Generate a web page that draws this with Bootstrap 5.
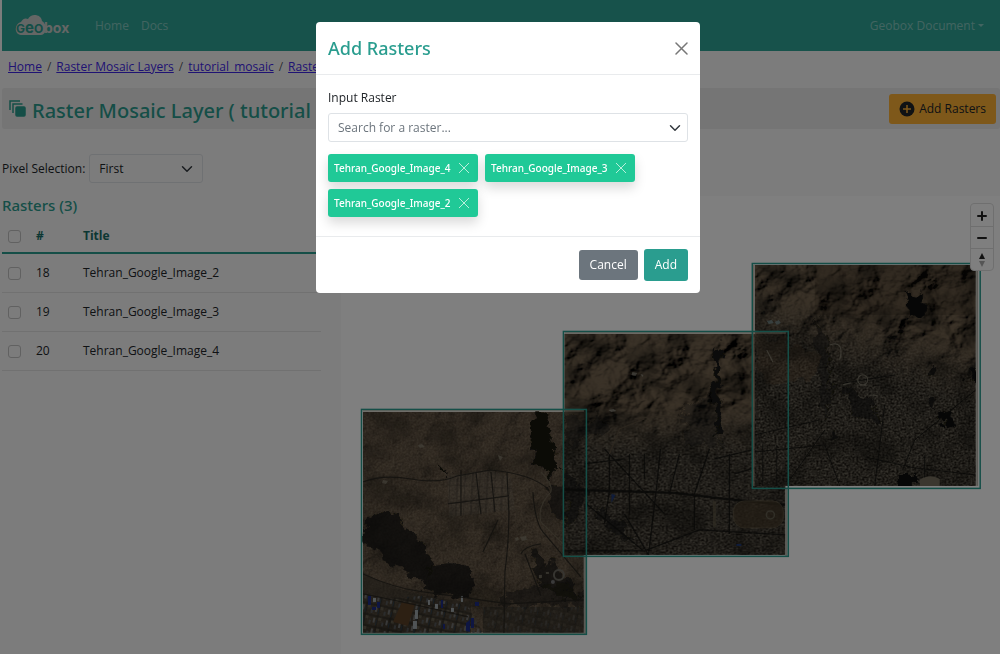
<!DOCTYPE html>
<html lang="en">
<head>
<meta charset="utf-8">
<meta name="viewport" content="width=device-width, initial-scale=1">
<title>Geobox – Raster Mosaic Layer</title>
<link rel="stylesheet" href="https://cdn.jsdelivr.net/npm/bootstrap@5.3.0/dist/css/bootstrap.min.css">
<style>
  :root { --geo: #2a9d8f; --geo-dark: #176f66; }
  body { font-family: "Open Sans", "Noto Sans", sans-serif; font-size: 12px; line-height: 18px; background: #f9f9f9; color: #212529; min-height: 100vh; }
  h1, h2, .chip { font-family: "Noto Sans", sans-serif; }
  .topbar { background: #2fa597; height: 51px; padding: 0 16px 0 13px; }
  .topbar a { color: rgba(255,255,255,.42); text-decoration: none; }
  .topbar .dropdown-toggle::after { vertical-align: 3px; margin-left: 3px; }
  .page { padding-left: 2px; min-height: 100vh; }
  .crumbs { padding: 7px 6px 12px; }
  .crumbs a { color: #3f26e8; }
  .crumbs .breadcrumb-item + .breadcrumb-item { padding-left: 5px; }
  .crumbs .breadcrumb-item + .breadcrumb-item::before { padding-right: 5px; }
  .titlebar { background: #eaeaea; height: 41px; padding: 0 4px 0 7px; border-radius: 3px; gap: 6px; }
  .titlebar h1 { color: var(--geo); font-size: 20px; line-height: 26px; font-weight: 500; padding-top: 4px; }
  .btn { font-size: 12px; line-height: 18px; border-radius: 3px; padding: 5px 10px; }
  .btn-add { background: #fdb034; color: #212529; padding: 5px 9px; }
  .sidebar { width: 34%; padding-right: 20px; }
  .choice { margin-top: 25px; gap: 4px; }
  .picker { width: 114px; height: 29px; }
  .form-select { font-size: 12px; line-height: 18px; padding: 4px 28px 4px 9px; border-radius: 3px; background-size: 12px; background-position: right 9px center; background-color: transparent; }
  .sidebar h2 { color: var(--geo); font-size: 15px; line-height: 20px; font-weight: 500; margin: 12px 0 5px; }
  .rasters { --bs-table-bg: transparent; }
  .rasters th, .rasters td { padding: 10px 6px; vertical-align: middle; border-color: #e2e2e2; }
  .rasters thead th { padding: 7px 6px; color: var(--geo-dark); border-bottom: 2px solid var(--geo); }
  .rasters td { height: 39px; }
  .rasters .tick { width: 28px; }
  .rasters .num { width: 47px; }
  .form-check-input { width: 13px; height: 13px; margin: 0; display: block; background-color: transparent; border-color: #c2c2c2; }
  .mappane { background: #fff; margin-top: 67px; }
  .zoomer { top: 7px; right: 6px; width: 24px; border: 1px solid #dedede; border-radius: 4px; background: #fff; }
  .zoomer button { height: 22px; border: 0; border-top: 1px solid #dedede; background: none; padding: 0; }
  .zoomer button:first-child { border-top: 0; }
  .modal { padding-left: 16px; }
  .modal-dialog { max-width: 384px; margin: 22px auto; }
  .modal-content { border: 0; border-radius: 4px; }
  .modal-header { padding: 12px; height: 53px; border-color: #e9ebed; }
  .modal-header h2 { color: var(--geo); font-size: 18px; line-height: 24px; font-weight: 500; }
  .modal-body { padding: 14px 12px 19px; }
  .modal-footer { padding: 12px; gap: 6px; border-color: #e9ebed; }
  .modal-footer > * { margin: 0; }
  .modal-body .form-label { margin-bottom: 6px; }
  .combo { height: 29px; color: #6c757d; background-position: right 6px center; }
  .chips { gap: 7px; margin-top: 12px; }
  .chip { background: #20c997; color: #fff; height: 28px; width: 150px; padding: 0 8px 0 6px; border-radius: 3px; font-size: 10px; font-weight: 500; box-shadow: 0 6px 12px rgba(0,0,0,.15); }
  .chip button, .closer { border: 0; background: none; padding: 0; line-height: 0; }
  .btn-cancel { background: #6c757d; color: #fff; }
  .btn-ok { background: var(--geo); color: #fff; padding: 6px 10px; }
</style>
</head>
<body>
<div class="page d-flex flex-column">
  <nav class="topbar d-flex align-items-center">
    <a href="#" aria-label="Geobox home" class="me-4">
      <svg width="56" height="24" viewBox="0 0 56 24" class="d-block">
        <path d="M6 21C-1 20-1 10 6 8C8 4 11 4 13 5C16-1 26 0 27 7C33 11 32 20 26 21Z" fill="#c9cccb"/>
        <g font-family="Inter, sans-serif" font-weight="700" font-size="14">
          <text x="1" y="19" fill="#2a9d8f" font-size="12">G<tspan font-size="15">e</tspan>O</text>
          <text x="29" y="19" fill="#c9cccb">box</text>
        </g>
      </svg>
    </a>
    <a href="#" class="me-2">Home</a>
    <a href="#" class="ms-1">Docs</a>
    <a href="#" class="dropdown-toggle ms-auto">Geobox Document</a>
  </nav>
  <nav class="crumbs" aria-label="breadcrumb">
    <ol class="breadcrumb mb-0">
      <li class="breadcrumb-item"><a href="#">Home</a></li>
      <li class="breadcrumb-item"><a href="#">Raster Mosaic Layers</a></li>
      <li class="breadcrumb-item"><a href="#">tutorial_mosaic</a></li>
      <li class="breadcrumb-item"><a href="#">Rasters</a></li>
    </ol>
  </nav>
  <header class="titlebar d-flex align-items-center">
    <svg width="17" height="17" viewBox="0 0 17 17" fill="none" stroke="#2a9d8f" stroke-width="1.5">
      <path d="M1 10V1H11M4 13V4H13.500"/><rect x="7" y="7" width="9" height="9" rx="1" fill="#2a9d8f"/>
    </svg>
    <h1 class="mb-0">Raster Mosaic Layer ( tutorial )</h1>
    <button type="button" class="btn btn-add ms-auto d-flex align-items-center gap-1">
      <svg width="16" height="16" viewBox="0 0 16 16"><circle cx="8" cy="8" r="7.500" fill="#212529"/><path d="M8 4v8M4 8h8" stroke="#fdb034" stroke-width="1.500"/></svg>
      Add Rasters
    </button>
  </header>
  <main class="d-flex flex-grow-1">
    <section class="sidebar flex-shrink-0">
      <div class="choice d-flex align-items-center">
        <label for="pixel" class="text-nowrap">Pixel Selection:</label>
        <select id="pixel" class="form-select picker"><option>First</option><option>Last</option></select>
      </div>
      <h2>Rasters (3)</h2>
      <table class="table rasters mb-0">
        <thead><tr>
          <th class="tick"><input type="checkbox" class="form-check-input" aria-label="Select all"></th>
          <th class="num">#</th><th>Title</th>
        </tr></thead>
        <tbody>
          <tr><td><input type="checkbox" class="form-check-input" aria-label="Select 18"></td><td>18</td><td>Tehran_Google_Image_2</td></tr>
          <tr><td><input type="checkbox" class="form-check-input" aria-label="Select 19"></td><td>19</td><td>Tehran_Google_Image_3</td></tr>
          <tr><td><input type="checkbox" class="form-check-input" aria-label="Select 20"></td><td>20</td><td>Tehran_Google_Image_4</td></tr>
        </tbody>
      </table>
    </section>
    <section class="mappane flex-grow-1 position-relative">
      <svg class="d-block w-100" viewBox="0 0 659 454" role="img" aria-label="Mosaic map">
        <defs>
          <filter id="hills" x="0" y="0" width="100%" height="100%">
            <feTurbulence type="fractalNoise" baseFrequency=".022 .026" numOctaves="5" seed="7"/>
            <feColorMatrix values="0 0 0 0 0  0 0 0 0 0  0 0 0 0 0  1 0 0 0 0"/>
            <feDiffuseLighting surfaceScale="20" diffuseConstant=".9" lighting-color="#7c6b54"><feDistantLight azimuth="215" elevation="46"/></feDiffuseLighting>
            <feComposite in2="SourceGraphic" operator="in"/>
          </filter>
          <filter id="plain" x="0" y="0" width="100%" height="100%">
            <feTurbulence type="fractalNoise" baseFrequency=".022" numOctaves="6" seed="21"/>
            <feColorMatrix values="0 0 0 0 0  0 0 0 0 0  0 0 0 0 0  1 0 0 0 0"/>
            <feDiffuseLighting surfaceScale="9" diffuseConstant=".95" lighting-color="#7a6852"><feDistantLight azimuth="225" elevation="55"/></feDiffuseLighting>
            <feComposite in2="SourceGraphic" operator="in"/>
          </filter>
          <filter id="city" x="0" y="0" width="100%" height="100%" color-interpolation-filters="sRGB">
            <feTurbulence type="fractalNoise" baseFrequency=".5" numOctaves="3" seed="4"/>
            <feColorMatrix values=".62 0 0 0 -.045  .61 0 0 0 -.06  .56 0 0 0 -.07  0 0 0 0 1"/>
            <feComposite in2="SourceGraphic" operator="in"/>
          </filter>
          <filter id="shade" x="0" y="0" width="100%" height="100%" color-interpolation-filters="sRGB">
            <feTurbulence type="fractalNoise" baseFrequency=".03" numOctaves="5" seed="15"/>
            <feColorMatrix values="0 0 0 0 .07  0 0 0 0 .065  0 0 0 0 .05  3.6 0 0 0 -1.65"/>
            <feComposite in2="SourceGraphic" operator="in"/>
          </filter>
          <filter id="rough" x="-10%" y="-10%" width="120%" height="120%">
            <feTurbulence type="fractalNoise" baseFrequency=".09" numOctaves="4" seed="9"/>
            <feDisplacementMap in="SourceGraphic" scale="20" xChannelSelector="R" yChannelSelector="G"/>
            <feGaussianBlur stdDeviation=".6"/>
          </filter>
          <linearGradient id="fade" x1="0" y1="0" x2="0" y2="1"><stop offset=".32" stop-color="#000"/><stop offset=".55" stop-color="#fff"/></linearGradient>
          <linearGradient id="fade4" x1=".25" y1="0" x2="0" y2="1"><stop offset=".15" stop-color="#000"/><stop offset=".42" stop-color="#fff"/></linearGradient>
          <mask id="low"><rect width="221" height="221" fill="url(#fade)"/></mask>
          <mask id="low4"><rect width="221" height="221" fill="url(#fade4)"/></mask>
          <pattern id="blocks" width="15" height="17" patternUnits="userSpaceOnUse" patternTransform="rotate(3)"><path d="M0 0V17M0 0H15M8 0V17" stroke="#191815" stroke-width=".6" fill="none"/></pattern>
          <pattern id="fine" width="9" height="6" patternUnits="userSpaceOnUse" patternTransform="rotate(-14)"><path d="M0 0V6M0 0H9" stroke="#1b1a17" stroke-width=".5" fill="none"/></pattern>
          <pattern id="sheds" width="13" height="11" patternUnits="userSpaceOnUse" patternTransform="rotate(12)"><rect x="1" y="1" width="2" height="5" fill="#7d8082"/><rect x="4" y="3" width="1" height="5" fill="#315b80"/><rect x="6" y="0" width="3" height="3" fill="#696353"/><rect x="10" y="4" width="2" height="4" fill="#595e62"/><path d="M0 10H13M5 0V11" stroke="#201f1b"/></pattern>
          <clipPath id="tile"><rect width="221" height="221"/></clipPath>
        </defs>

        <!-- Tehran_Google_Image_2 -->
        <g transform="translate(22 216)" clip-path="url(#tile)">
          <rect width="221" height="221" filter="url(#plain)"/>
          <rect width="221" height="221" filter="url(#city)" opacity=".3"/>
          <rect width="221" height="221" filter="url(#shade)" opacity=".3"/>
          <g filter="url(#rough)" fill="#161611">
            <path d="M168 0H181L190 30 198 55 184 68 172 45Z"/>
            <path d="M2 110L27 98 42 113 58 132 70 149 63 172 40 160 20 145 0 128Z" opacity=".75"/>
            <path d="M66 153L104 150 110 180 95 187 60 178Z" opacity=".75"/>
            <path d="M165 136L182 146 205 168 220 188 190 186 172 160Z" opacity=".65"/>
            <path d="M186 74L226 70V112L190 104Z" opacity=".6"/>
            <path d="M142 184L182 172 228 180V195L140 192Z" opacity=".5"/>
            <path d="M75 54L83 56 82 63 75 61Z"/>
          </g>
          <path d="M84 64L128 58 148 66 152 98 86 105Z" fill="#8f9088" opacity=".13"/>
          <path d="M84 64L128 58 148 66 152 98 86 105Z" fill="url(#blocks)" opacity=".7"/>
          <path d="M0 160Q40 185 108 190V221H0Z" fill="#35322a" opacity=".5"/>
          <path d="M0 182L20 186 60 184 105 194 120 221H0Z" fill="url(#sheds)" opacity=".8"/>
          <path d="M120 195H221V221H120Z" fill="#2c2a24" opacity=".5"/>
          <path d="M120 195H221V221H120Z" fill="url(#sheds)" opacity=".3"/>
          <path d="M39 190L52 192 45 214 30 210Z" fill="#5b4027"/>
          <g fill="#1d2c86"><path d="M5 184h3v9H5zM14 190h3v6h-3zM9 195h4v3h-4zM103 211l4-3v12l-4-1zM108 206h3v10h-3zM112 190h4v4h-4zM78 188h2v8h-2zM80 212h2v5h-2z"/></g>
          <path d="M52 198h3v9h-3zM50 209h4v8h-4zM10 186h3v4h-3zM72 192h3v5h-3zM65 188h2v5h-2zM98 184h2v6h-2zM88 196h3v4h-3z" fill="#a0a8ac"/>
          <g fill="none" stroke="#24221d" stroke-width="1.200" opacity=".85">
            <path d="M0 70Q20 62 48 67T94 64L128 58Q170 62 186 78M144 60L146 100Q146 130 142 160L141 221M98 58V104M113 60L118 102M128 60L132 100M85 92L146 84M170 80Q172 110 180 120L218 165M0 162Q30 176 60 180T145 192L221 188M158 142Q162 134 178 132M162 142L178 184M45 145Q70 160 63 176M0 182Q50 192 105 205M120 140L135 108"/>
            <path d="M178 60Q190 72 188 80Q174 95 178 110L200 132" stroke="#6e6554"/>
          </g>
          <circle cx="196" cy="163" r="5" fill="none" stroke="#6e6b62" stroke-width="2"/><circle cx="190" cy="170" r="2" fill="#777"/>
          <path d="M152 126l3-1 1 3-3 1zM157 125l6-1 1 4-5 1zM135 43l5 2-3 4zM55 33l4-1 3 3-5 1zM20 68l5 1-2 3-4-1zM176 163h3v3h-3zM183 160h3v2h-3z" fill="#888172" opacity=".7"/>
        </g>
        <path d="M244 217V438" stroke="#b5b3a8" stroke-width="2"/>

        <!-- Tehran_Google_Image_3 -->
        <g transform="translate(223.500 138)" clip-path="url(#tile)">
          <rect width="221" height="221" filter="url(#hills)"/>
          <g mask="url(#low)"><rect width="221" height="221" filter="url(#city)"/><path d="M0 115H221V221H0Z" fill="url(#blocks)" opacity=".7"/></g>
          <rect width="221" height="221" filter="url(#shade)" opacity=".4"/>
          <g filter="url(#rough)" fill="#171713">
            <path d="M151 10L157 15 155 60 160 100 153 105 148 70Z"/><path d="M0 80L25 88 35 75 45 95 0 115Z" opacity=".4"/>
            <path d="M120 75L145 60 160 110 120 115Z" opacity=".35"/><path d="M0 140L22 155 15 185 0 190Z" opacity=".6"/>
            <path d="M30 175L50 182 68 205 50 200Z" opacity=".6"/>
          </g>
          <g fill="none" stroke="#11110f" stroke-width="1.300" opacity=".85">
            <path d="M0 156L45 157 110 159 160 165 221 171" stroke-width="2.200"/>
            <path d="M40 115L100 180 M45 120V157L40 190M96 115L92 155 84 221M0 217H80L135 196 221 201M60 180L84 221M22 170L78 216M115 120L105 160M145 115L130 160V196M165 120V200M20 130L60 125M65 120V180M80 120V145M170 140L221 125M150 125L221 108"/>
            <path d="M45 120L55 95 80 85M70 85Q100 80 120 85" stroke="#5c5040"/>
          </g>
          <rect x="169" y="167" width="50" height="27" rx="11" fill="#493d2b" stroke="#665b47" stroke-width="1" opacity=".7"/>
          <path d="M150 167v26" stroke="#615947" stroke-width="3" opacity=".7"/><circle cx="206" cy="181" r="4" fill="none" stroke="#656051" stroke-width="1.500"/>
          <path d="M44 76l5-1 3 2-5 1zM68 38l5 1-2 3-4-1zM76 40l3 1-1 2z" fill="#98958a" opacity=".7"/><path d="M47 160l4 1-4 8zM172 210h5v2h-5z" fill="#203b78"/>
        </g>
        <path d="M445.500 292V360" stroke="#b5b3a8" stroke-width="2"/>

        <!-- Tehran_Google_Image_4 -->
        <g transform="translate(414 69)" clip-path="url(#tile)">
          <rect width="221" height="221" filter="url(#hills)"/>
          <path d="M60 0H221V50H60Z" fill="#2a1f14" opacity=".2"/>
          <g mask="url(#low4)"><rect width="221" height="221" filter="url(#city)"/><path d="M0 50H221V221H0Z" fill="url(#fine)" opacity=".6"/></g>
          <path d="M0 70L60 85 66 110 20 118 0 110Z" fill="#66513a" opacity=".4" filter="url(#rough)"/>
          <rect width="221" height="221" filter="url(#shade)" opacity=".4"/>
          <g filter="url(#rough)" fill="#10100e">
            <path d="M150 28L170 30 172 50 154 54Z"/><path d="M60 50L72 75 78 130 70 160 64 110Z" opacity=".5"/>
            <circle cx="192" cy="154" r="5"/><circle cx="220" cy="112" r="6"/><circle cx="177" cy="107" r="5" opacity=".8"/><circle cx="178" cy="138" r="5" opacity=".8"/>
            <path d="M88 122L105 128 128 150 122 160 95 145Z" opacity=".6"/><path d="M144 210h15v13h-15z"/><circle cx="80" cy="172" r="4" opacity=".7"/>
          </g>
          <g fill="none" stroke="#11110f" stroke-width="1" opacity=".8"><path d="M0 170L65 155M0 187L70 180M35 215L70 165M110 192L160 203 221 210M148 205L160 175 221 125M90 118L140 110M130 140L120 221M8 180V221M22 180V221M70 180L85 221M170 190V221"/></g>
          <g fill="none" stroke="#8b8677" stroke-width="1.200" opacity=".7"><circle cx="108" cy="115" r="5"/><path d="M88 120l8-2M118 130l5 1M75 80Q90 75 85 95M12 85l6 12"/></g>
          <path d="M165 215Q175 208 185 214V221H165Z" fill="#766f5f"/><path d="M12 56l5-1 2 3-5 1zM20 57l4-2 2 3-4 2z" fill="#7b9498" opacity=".7"/>
        </g>
        <path d="M413 69V290M413 67.500H636M224 137H445M22 215H243M22 438H244" fill="none" stroke="#b5a995"/>
        <path d="M636.500 70V290" stroke="#b5b3a8" stroke-width="2"/>
        <g fill="none" stroke="#2a9d8f" stroke-width="1.500">
          <rect x="20.500" y="213.500" width="225" height="225"/><rect x="222.500" y="135.500" width="225" height="225"/><rect x="411.500" y="67.500" width="228" height="225"/>
        </g>
      </svg>
      <div class="zoomer position-absolute d-flex flex-column">
        <button type="button" aria-label="Zoom in"><svg width="10" height="10" viewBox="0 0 10 10"><path d="M5 1V9M1 5H9" stroke="#222" stroke-width="2" stroke-linecap="round"/></svg></button>
        <button type="button" aria-label="Zoom out"><svg width="10" height="10" viewBox="0 0 10 10"><path d="M1 5H9" stroke="#222" stroke-width="2" stroke-linecap="round"/></svg></button>
        <button type="button" aria-label="Reset north"><svg width="8" height="14" viewBox="0 0 8 14"><path d="M4 0L7 6H1Z" fill="#222"/><path d="M4 14L7 8H1Z" fill="#aaa"/></svg></button>
      </div>
    </section>
  </main>
</div>

<div class="modal-backdrop show"></div>
<div class="modal show d-block" tabindex="-1" role="dialog" aria-labelledby="dlg">
  <div class="modal-dialog">
    <div class="modal-content">
      <div class="modal-header">
        <h2 class="mb-0" id="dlg">Add Rasters</h2>
        <button type="button" class="closer" aria-label="Close"><svg width="13" height="13" viewBox="0 0 13 13"><path d="M1 1L12 12M12 1L1 12" stroke="#777" stroke-width="1.500" stroke-linecap="round"/></svg></button>
      </div>
      <div class="modal-body">
        <label for="raster" class="form-label">Input Raster</label>
        <select id="raster" class="form-select combo"><option>Search for a raster...</option></select>
        <div class="chips d-flex flex-wrap">
          <span class="chip d-flex align-items-center justify-content-between">Tehran_Google_Image_4 <button type="button" aria-label="Remove"><svg width="12" height="12" viewBox="0 0 12 12"><path d="M1 1L11 11M11 1L1 11" stroke="#b9efdc"/></svg></button></span>
          <span class="chip d-flex align-items-center justify-content-between">Tehran_Google_Image_3 <button type="button" aria-label="Remove"><svg width="12" height="12" viewBox="0 0 12 12"><path d="M1 1L11 11M11 1L1 11" stroke="#b9efdc"/></svg></button></span>
          <span class="chip d-flex align-items-center justify-content-between">Tehran_Google_Image_2 <button type="button" aria-label="Remove"><svg width="12" height="12" viewBox="0 0 12 12"><path d="M1 1L11 11M11 1L1 11" stroke="#b9efdc"/></svg></button></span>
        </div>
      </div>
      <div class="modal-footer">
        <button type="button" class="btn btn-cancel">Cancel</button>
        <button type="button" class="btn btn-ok">Add</button>
      </div>
    </div>
  </div>
</div>
<script src="https://cdn.jsdelivr.net/npm/bootstrap@5.3.0/dist/js/bootstrap.bundle.min.js"></script>
</body>
</html>
